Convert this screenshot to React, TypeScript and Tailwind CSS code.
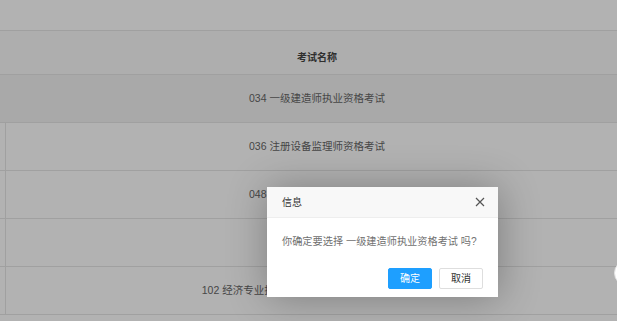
import * as React from "react"

const rows = [
  { name: "034 一级建造师执业资格考试", active: true },
  { name: "036 注册设备监理师资格考试" },
  { name: "048 注册计量师职业资格考试" },
  { name: "065 注册城乡规划师" },
  { name: "102 经济专业技术资格考试（初级、中级、高级）" },
]

const font = "font-['Liberation_Sans','Noto_Sans_CJK_SC',sans-serif]"

function Dialog() {
  return (
    <div className="absolute left-[267px] top-[187px] flex w-[231px] flex-col bg-white shadow-[1px_1px_40px_rgba(0,0,0,0.3)]">
      <div className="flex h-[31px] items-center justify-between border-b border-[#eeeeee] bg-[#f8f8f8] pl-[15px] pr-[13px]">
        <span className="text-[10px] text-[#333333]">信息</span>
        <svg width="10" height="10" viewBox="0 0 10 10" className="text-[#555]">
          <path d="M1 1 L9 9 M9 1 L1 9" stroke="currentColor" strokeWidth="1.2" />
        </svg>
      </div>
      <div className="px-[15px] pb-[19px] pt-[17px] text-[10.2px] leading-[14px] text-[#707070]">
        你确定要选择 一级建造师执业资格考试 吗?
      </div>
      <div className="flex justify-end gap-[7px] px-[15px] pb-[8px]">
        <button className="h-[21px] w-[44px] rounded-[2px] border border-[#1e9fff] bg-[#1e9fff] text-[10px] text-white">
          确定
        </button>
        <button className="h-[21px] w-[44px] rounded-[2px] border border-[#dedede] bg-white text-[10px] text-[#333333]">
          取消
        </button>
      </div>
    </div>
  )
}

export default function App() {
  return (
    <div className={`relative h-[321px] w-[617px] overflow-hidden bg-white ${font}`}>
      <div className="h-[31px] border-b border-[#e6e6e6]" />
      <div className="w-[628px]">
        <div className="flex h-[44px] border-b border-[#e6e6e6] bg-[#f9f9f9]">
          <div className="w-[6px]" />
          <div className="flex flex-1 items-center justify-center pt-[10px] text-[10px] font-bold text-[#444444]">
            考试名称
          </div>
        </div>
        {rows.map((r) => (
          <div
            key={r.name}
            className={`flex h-[48px] border-b border-[#e6e6e6] ${r.active ? "bg-[#f2f2f2]" : "bg-white"}`}
          >
            <div className={`w-[6px] ${r.active ? "" : "border-r border-[#e6e6e6]"}`} />
            <div className="flex flex-1 items-center justify-center text-[10.5px] text-[#666666]">
              {r.name}
            </div>
          </div>
        ))}
      </div>
      <div className="absolute inset-0 bg-black/30" />
      <div className="absolute left-[614px] top-[260px] h-[26px] w-[26px] rounded-full border border-[#e2e2e2] bg-white" />
      <Dialog />
    </div>
  )
}
